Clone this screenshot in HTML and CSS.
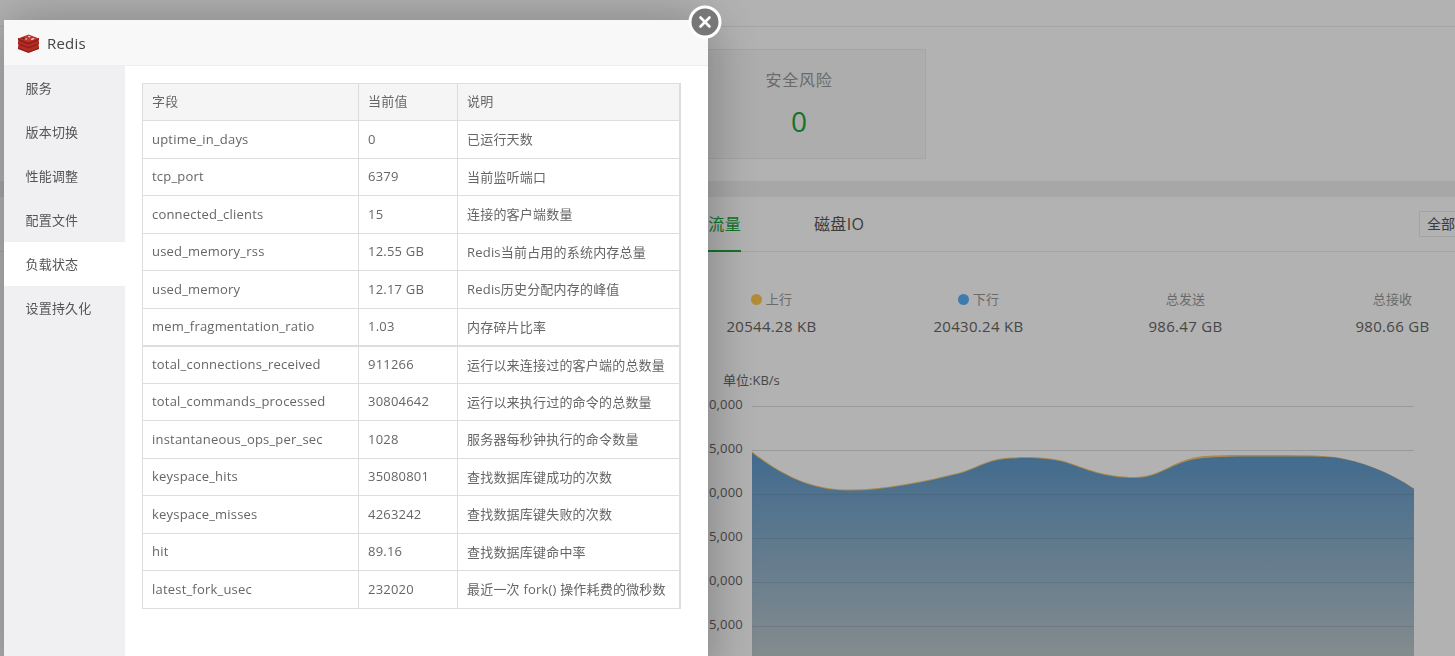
FILE: index.html
```html
<!DOCTYPE html>
<html lang="zh">
<head>
<meta charset="utf-8">
<title>Redis</title>
<link rel="stylesheet" href="styles.css">
</head>
<body>
<div class="page">
  <div class="topbar"></div>
  <section class="cards">
    <div class="card">
      <div class="card-title">安全风险</div>
      <div class="card-value">0</div>
    </div>
  </section>
  <section class="panel">
    <div class="tabs">
      <div class="tab active">网络流量</div>
      <div class="tab">磁盘IO</div>
      <div class="select">全部</div>
    </div>
    <div class="stats">
      <div class="stat"><div class="stat-label"><i class="dot up"></i>上行</div><div class="stat-value">20544.28 KB</div></div>
      <div class="stat"><div class="stat-label"><i class="dot down"></i>下行</div><div class="stat-value">20430.24 KB</div></div>
      <div class="stat"><div class="stat-label">总发送</div><div class="stat-value">986.47 GB</div></div>
      <div class="stat"><div class="stat-label">总接收</div><div class="stat-value">980.66 GB</div></div>
    </div>
    <div class="unit">单位:KB/s</div>
    <div class="chart">
      <div class="axis">
        <span>30,000</span><span>25,000</span><span>20,000</span><span>15,000</span><span>10,000</span><span>5,000</span>
      </div>
      <svg class="plot" width="664" height="252" viewBox="752 404 664 252">
        <defs>
          <linearGradient id="fill" gradientUnits="userSpaceOnUse" x1="0" y1="455" x2="0" y2="656">
            <stop offset="0" stop-color="#5f9acc"/>
            <stop offset="1" stop-color="#bdc8cb"/>
          </linearGradient>
        </defs>
        <path stroke="#dcdcdc" stroke-width="1" d="M752 406.500H1414M752 450.500H1414"/>
        <path fill="#f5c56f" d="M752 451.500C775 469 805 489 847 489.500C885 490 925 481 960 472.500C975 468.500 985 460 1005 458C1020 456.500 1050 456 1070 463C1085 468 1105 477 1135 477C1160 477 1170 462 1197 457C1210 455 1230 455 1260 455C1290 455 1320 455 1335 457C1360 461 1390 472 1414 488.500V656H752Z"/>
        <path fill="url(#fill)" d="M752 453C775 470 805 490 847 490.500C885 491 925 482 960 473.500C975 469.500 985 461 1005 459C1020 457.500 1050 457 1070 464C1085 469 1105 478 1135 478C1160 478 1170 463 1197 459C1210 457 1230 456.500 1260 456.500C1290 456.500 1320 456 1335 457.500C1360 461 1390 472 1414 489V656H752Z"/>
        <path stroke="#3c4a64" stroke-opacity=".15" stroke-width="1" d="M752 494.500H1414M752 538.500H1414M752 582.500H1414M752 626.500H1414"/>
      </svg>
    </div>
  </section>
</div>
<div class="shade"></div>
<div class="modal">
  <header class="modal-head">
    <svg class="logo" width="21" height="19" viewBox="0 0 21 19">
      <path fill="#8f1f19" d="M0 12.500V15L10.500 19L21 15V12.500Z"/>
      <path fill="#b52c26" d="M0 11.500L10.500 7.500L21 11.500V13.500L10.500 17.500L0 13.500Z"/>
      <path fill="#8f1f19" d="M0 8V10.500L10.500 14.500L21 10.500V8Z"/>
      <path fill="#b52c26" d="M0 7L10.500 3L21 7V9L10.500 13L0 9Z"/>
      <path fill="#8f1f19" d="M0 4V6.500L10.500 10.500L21 6.500V4Z"/>
      <path fill="#c0332c" d="M0 4.500L10.500 0.500L21 4.500L10.500 8.500Z"/>
      <path fill="#f6dcda" d="M9.500 1.800L12.500 2.200L11.500 3.800ZM6.500 4L9.800 4.700L7.800 5.800ZM12.500 5L15.500 3.900L16.600 5L13.800 6Z"/>
      <path fill="#7d1a14" d="M3 4.500L5.500 3.600L8 4.300L5.500 5.300Z"/>
    </svg>
    <span class="modal-title">Redis</span>
  </header>
  <div class="modal-body">
    <nav class="side">
      <div class="side-item">服务</div>
      <div class="side-item">版本切换</div>
      <div class="side-item">性能调整</div>
      <div class="side-item">配置文件</div>
      <div class="side-item active">负载状态</div>
      <div class="side-item">设置持久化</div>
    </nav>
    <main class="content">
      <table class="status">
        <thead>
          <tr><th class="c1">字段</th><th class="c2">当前值</th><th class="c3">说明</th></tr>
        </thead>
        <tbody>
          <tr><td>uptime_in_days</td><td>0</td><td>已运行天数</td></tr>
          <tr><td>tcp_port</td><td>6379</td><td>当前监听端口</td></tr>
          <tr><td>connected_clients</td><td>15</td><td>连接的客户端数量</td></tr>
          <tr><td>used_memory_rss</td><td>12.55 GB</td><td>Redis当前占用的系统内存总量</td></tr>
          <tr><td>used_memory</td><td>12.17 GB</td><td>Redis历史分配内存的峰值</td></tr>
          <tr class="thick"><td>mem_fragmentation_ratio</td><td>1.03</td><td>内存碎片比率</td></tr>
          <tr><td>total_connections_received</td><td>911266</td><td>运行以来连接过的客户端的总数量</td></tr>
          <tr><td>total_commands_processed</td><td>30804642</td><td>运行以来执行过的命令的总数量</td></tr>
          <tr><td>instantaneous_ops_per_sec</td><td>1028</td><td>服务器每秒钟执行的命令数量</td></tr>
          <tr><td>keyspace_hits</td><td>35080801</td><td>查找数据库键成功的次数</td></tr>
          <tr><td>keyspace_misses</td><td>4263242</td><td>查找数据库键失败的次数</td></tr>
          <tr><td>hit</td><td>89.16</td><td>查找数据库键命中率</td></tr>
          <tr><td>latest_fork_usec</td><td>232020</td><td>最近一次 fork() 操作耗费的微秒数</td></tr>
        </tbody>
      </table>
    </main>
  </div>
  <svg class="close" width="34" height="34" viewBox="0 0 34 34">
    <circle cx="17" cy="17" r="15" fill="#777" stroke="#fff" stroke-width="3"/>
    <path d="M12.500 12.500L21.500 21.500M21.500 12.500L12.500 21.500" stroke="#fff" stroke-width="2.600" stroke-linecap="round"/>
  </svg>
</div>
</body>
</html>
```
FILE: styles.css
```css
* { box-sizing: border-box; }
html, body { margin: 0; height: 100%; overflow: hidden; }
body {
  font-family: "Open Sans", "Noto Sans CJK SC", sans-serif;
  letter-spacing: .2px;
  color: #666;
  background: #fff;
}
.page { width: 1500px; height: 656px; overflow: hidden; background: #f0f0f0; }
.topbar { height: 27px; background: #fff; border-bottom: 1px solid #ececec; }
.cards { background: #fff; height: 154px; padding: 22px 0 0 672px; }
.card {
  width: 254px; height: 110px;
  background: #f8f8f8; border: 1px solid #ececec;
  display: flex; flex-direction: column; align-items: center;
}
.card-title { font-size: 16px; letter-spacing: .7px; line-height: 22px; color: #999; margin-top: 19px; }
.card-value { font-size: 28px; line-height: 40px; color: #20a53a; margin-top: 10px; }
.panel { margin-top: 16px; background: #fff; height: 480px; }
.tabs {
  height: 55px; border-bottom: 1px solid #eee;
  display: flex; padding: 0 21px 0 675.500px;
}
.tab { flex: none; white-space: nowrap; font-size: 16px; letter-spacing: .4px; line-height: 54px; height: 55px; color: #555; margin-right: 72.800px; }
.tab.active { color: #20a53a; border-bottom: 2px solid #20a53a; }
.select {
  margin-left: auto; margin-top: 14px;
  width: 60px; height: 26px; border: 1px solid #e8e8e8;
  font-size: 14px; letter-spacing: 0; line-height: 24px; padding-left: 7px; color: #555;
}
.stats { display: grid; grid-template-columns: repeat(4, 207px); padding: 34px 0 0 668px; }
.stat { text-align: center; }
.stat-label { font-size: 13px; line-height: 26px; color: #999; display: flex; justify-content: center; align-items: center; }
.stat-value { font-size: 15px; letter-spacing: .3px; line-height: 28px; color: #666; }
.dot { width: 11px; height: 11px; border-radius: 50%; margin-right: 4px; }
.dot.up { background: #ffc850; }
.dot.down { background: #5ab0ff; }
.unit { font-size: 13px; letter-spacing: 0; line-height: 18px; margin: 31px 0 0 723px; color: #666; }
.chart { display: flex; margin-top: 15px; padding-left: 700px; }
.axis {
  width: 52px; display: flex; flex-direction: column; align-items: flex-end;
  padding-right: 9px; font-size: 13px; margin-top: -7px; color: #666;
}
.axis span { flex: none; height: 44px; line-height: 14px; }
.plot { display: block; }
.shade { position: fixed; inset: 0; background: rgba(0,0,0,.3); }
.modal {
  position: fixed; left: 4px; top: 20px; width: 704px; height: 660px;
  background: #fff; box-shadow: 1px 1px 50px rgba(0,0,0,.3);
}
.modal-head {
  height: 46px; background: #f8f8f8; border-bottom: 1px solid #eee;
  display: flex; align-items: center; padding: 1px 0 0 14px;
}
.logo { display: block; margin-right: 8px; }
.modal-title { font-size: 15px; color: #444; }
.modal-body { display: flex; height: 614px; }
.side { width: 121px; background: #f0f0f2; }
.side-item { height: 44px; line-height: 44px; padding-left: 21.500px; font-size: 13px; color: #555; }
.side-item.active { background: #fff; }
.content { flex: 1; padding: 16.500px 0 0 17px; }
.status { border-collapse: collapse; width: 537px; table-layout: fixed; font-size: 13px; color: #666; }
.status th, .status td {
  height: 37.500px; padding: 0 9px 1px; border: 1px solid #ddd;
  text-align: left; font-weight: 400; white-space: nowrap;
}
.status th { background: #f5f5f5; padding-bottom: 2px; }
.status th:last-child, .status td:last-child { border-right-width: 2px; }
.status tr.thick td { border-bottom-width: 2px; }
.c1 { width: 216px; }
.c2 { width: 99px; }
.c3 { width: 222px; }
.close { position: absolute; left: 684px; top: -15px; }
```
